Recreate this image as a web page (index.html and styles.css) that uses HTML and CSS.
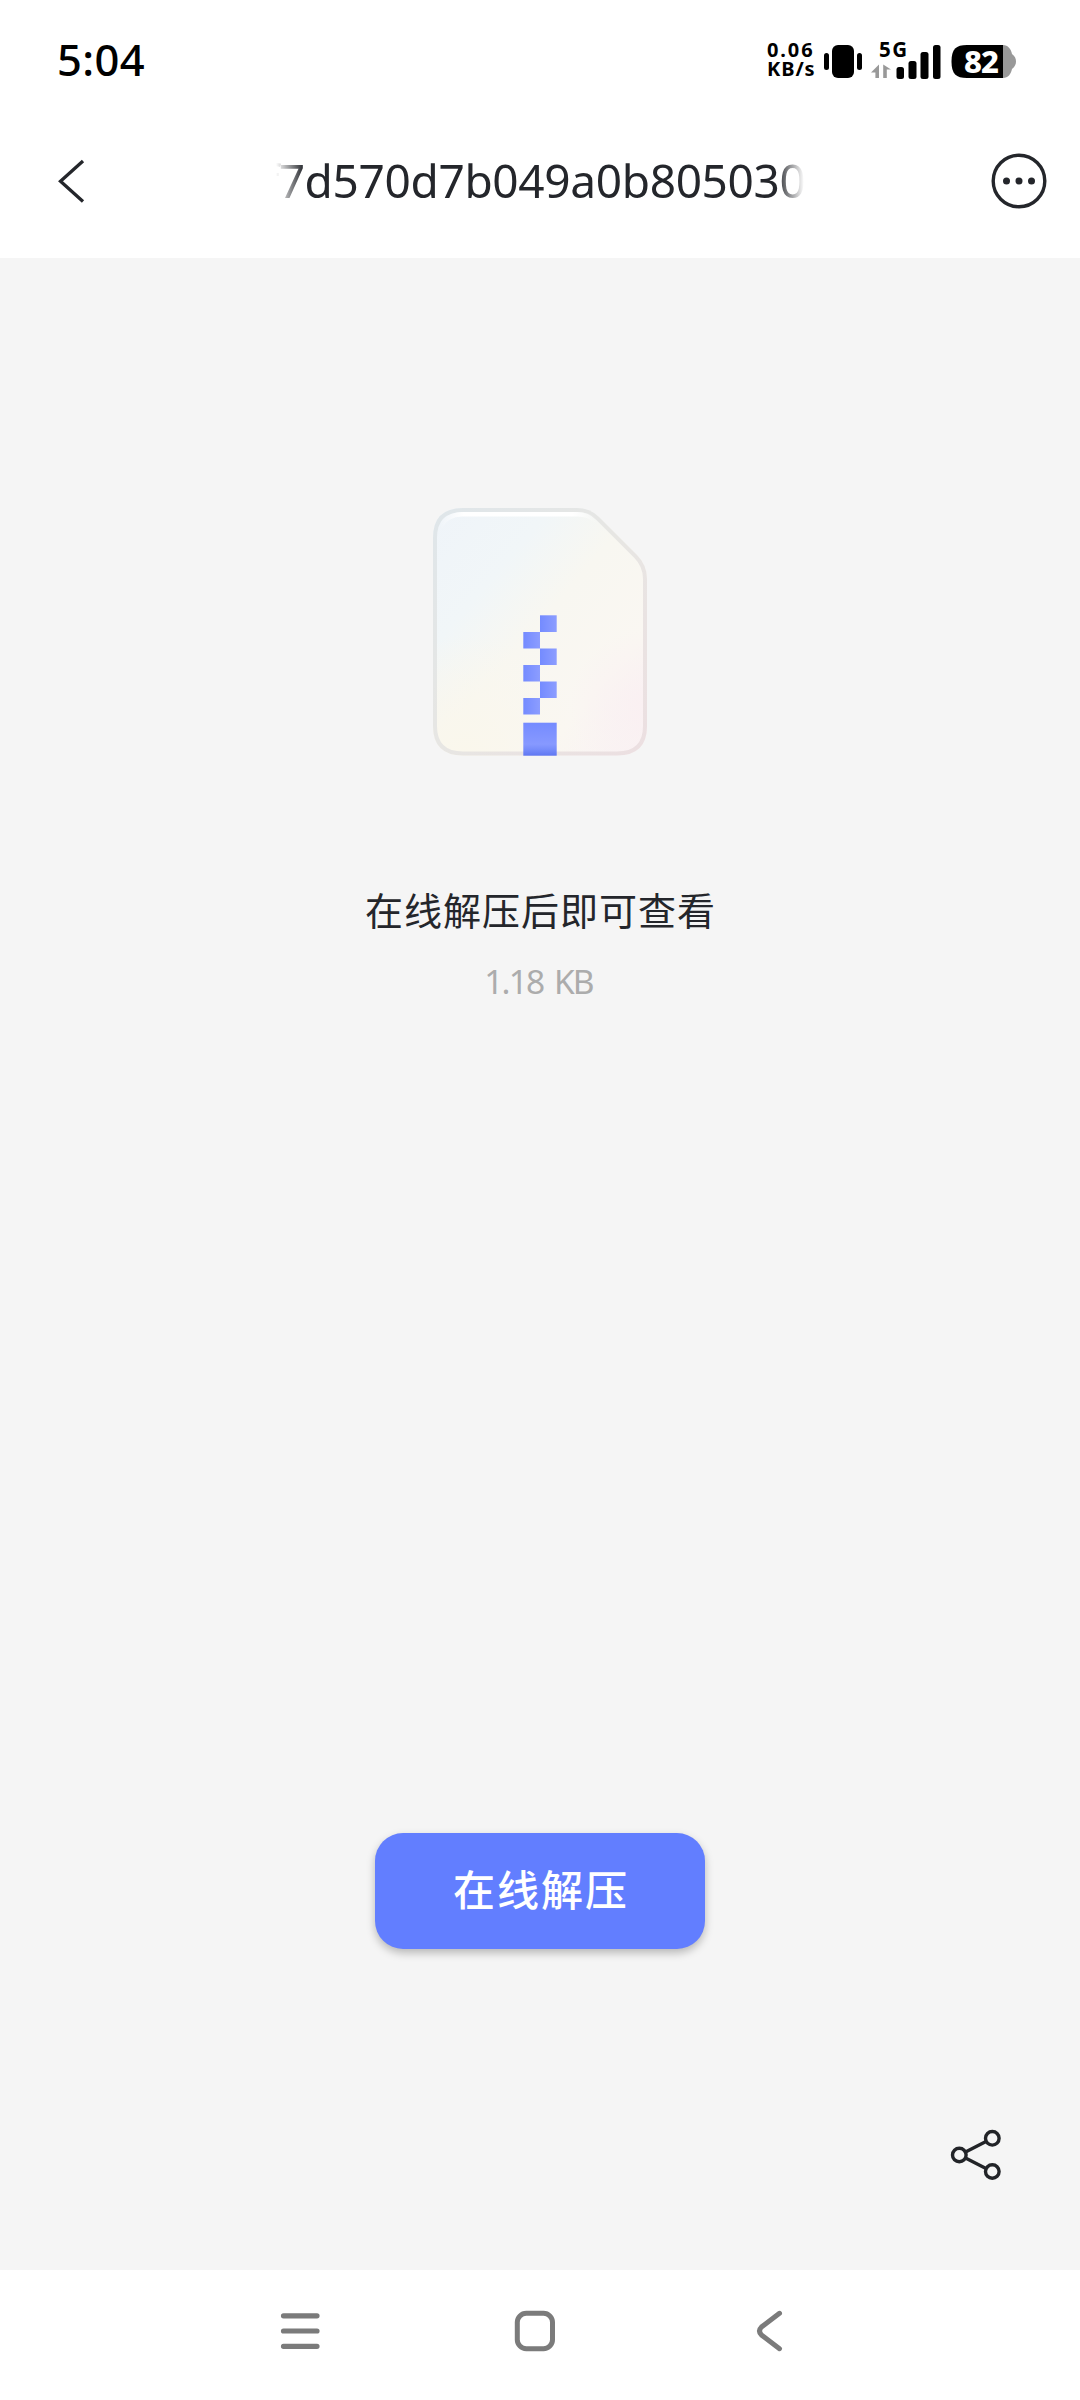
FILE: index.html
```
<!DOCTYPE html>
<html lang="zh-CN">
<head>
<meta charset="utf-8">
<title>在线解压</title>
<link rel="stylesheet" href="styles.css">
</head>
<body>
<div class="status">
  <span class="time">5:04</span>
  <div class="speed"><span class="rate">0.06</span><span>KB/s</span></div>
  <svg class="indicators" width="200" height="50" viewBox="820 35 200 50">
    <g fill="#000">
      <rect x="824" y="53" width="5" height="17" rx="2.5"/>
      <rect x="832" y="45" width="22" height="33" rx="6"/>
      <rect x="857" y="53" width="5" height="17" rx="2.5"/>
      <rect x="896.500" y="67" width="7.500" height="12" rx="2.500"/>
      <rect x="908.500" y="61" width="8" height="18" rx="2.500"/>
      <rect x="920.500" y="52" width="8" height="27" rx="2.500"/>
      <rect x="933" y="45" width="7.500" height="34" rx="2.500"/>
    </g>
    <path d="M879 64.500V78h-3.600v-5.500H871zM883.200 64.500V78h3.600v-8.500H891z" fill="#999"/>
    <text class="net" x="879" y="57" textLength="28">5G</text>
    <path d="M1002 45h1c5 0 8 4 9 9 3 2 4 5 4 7.500s-1 5-4 7.500c-1 5-4 9-9 9h-1z" fill="#999"/>
    <path d="M1003 45h-36c-11 0-15.500 4-15.500 16.500S956 78 967 78h36z" fill="#000"/>
    <text class="level" x="964" y="72.500" textLength="35">82</text>
  </svg>
</div>
<header class="header">
  <svg width="28" height="46" viewBox="57 158 28 46" fill="none" stroke="#24262b" stroke-width="3.300"><path d="M83 161L60.500 181.300 83 201.600"/></svg>
  <div class="title"><span>f7d570d7b049a0b805030</span></div>
  <svg width="56" height="56" viewBox="-28 -28 56 56"><circle r="25.800" fill="none" stroke="#24262b" stroke-width="3.400"/><g fill="#24262b"><circle cx="-12.500" r="3.500"/><circle r="3.500"/><circle cx="12.500" r="3.500"/></g></svg>
</header>
<main class="main">
  <svg class="file" width="216" height="250" viewBox="432 507 216 250">
    <defs>
      <linearGradient id="base" x1="0" y1="0" x2="1" y2="1">
        <stop offset="0" stop-color="#eff4f9"/><stop offset=".28" stop-color="#f1f6f8"/><stop offset=".48" stop-color="#f8f7f1"/><stop offset=".75" stop-color="#faf7f2"/><stop offset="1" stop-color="#f9f1f3"/>
      </linearGradient>
      <linearGradient id="edge" x1="0" y1="0" x2="1" y2="1">
        <stop offset="0" stop-color="#dfe6ea"/><stop offset=".5" stop-color="#e7e6e3"/><stop offset="1" stop-color="#ecdfe1"/>
      </linearGradient>
      <radialGradient id="warm"><stop offset="0" stop-color="#faf7ec"/><stop offset="1" stop-color="#faf7ec" stop-opacity="0"/></radialGradient>
      <radialGradient id="pink"><stop offset="0" stop-color="#faf0f2"/><stop offset="1" stop-color="#faf0f2" stop-opacity="0"/></radialGradient>
      <radialGradient id="sand"><stop offset="0" stop-color="#e9e4d6"/><stop offset="1" stop-color="#e9e4d6" stop-opacity="0"/></radialGradient>
      <linearGradient id="shine" x1="0" x2="1"><stop offset="0" stop-color="#fff" stop-opacity="0"/><stop offset=".15" stop-color="#fff"/><stop offset=".85" stop-color="#fff"/><stop offset="1" stop-color="#fff" stop-opacity="0"/></linearGradient>
      <linearGradient id="zip" x1="0" x2="1"><stop offset="0" stop-color="#748bff"/><stop offset="1" stop-color="#8c9dff"/></linearGradient>
      <linearGradient id="pull" x1="0" y1="0" x2="0" y2="1"><stop offset="0" stop-color="#758bff"/><stop offset=".65" stop-color="#8799ff"/><stop offset=".8" stop-color="#788dfb"/><stop offset="1" stop-color="#5f77f2"/></linearGradient>
      <clipPath id="sheet"><path d="M463 508H577Q590 508 599 517L637 555Q647 565 647 579V726Q647 755.500 617 755.500H463Q433 755.500 433 726V538Q433 508 463 508Z"/></clipPath>
    </defs>
    <g clip-path="url(#sheet)">
      <rect x="433" y="508" width="214" height="248" fill="url(#base)"/>
      <circle cx="465" cy="755" r="120" fill="url(#warm)"/>
      <circle cx="645" cy="705" r="75" fill="url(#pink)"/>
      <g fill="none" stroke-width="8">
        <path d="M463 508H577Q590 508 599 517L637 555Q647 565 647 579V726Q647 755.500 617 755.500H463Q433 755.500 433 726V538Q433 508 463 508Z" stroke="url(#edge)"/>
        <path d="M433 640V726Q433 755.500 463 755.500H545" stroke="url(#sand)"/>
      </g>
      <path d="M440 527Q447 514.500 462 514.200H577Q588 514 596 521" fill="none" stroke="url(#shine)" stroke-width="4.500"/>
    </g>
    <g fill="url(#zip)">
      <rect x="540" y="615.300" width="16.700" height="16.700"/><rect x="523.300" y="632" width="16.700" height="16.500"/>
      <rect x="540" y="648.500" width="16.700" height="16.500"/><rect x="523.300" y="665" width="16.700" height="16.500"/>
      <rect x="540" y="681.500" width="16.700" height="16.500"/><rect x="523.300" y="698" width="16.700" height="16.500"/>
    </g>
    <rect x="523.300" y="722.700" width="33.400" height="33" fill="url(#pull)"/>
  </svg>
  <p class="hint">在线解压后即可查看</p>
  <p class="size">1.18 KB</p>
  <button class="unzip">在线解压</button>
  <svg class="share" width="54" height="54" viewBox="949 2128 54 54" fill="none" stroke="#222428" stroke-width="3.400"><circle cx="959.300" cy="2155" r="6.800"/><circle cx="992.300" cy="2138.300" r="6.800"/><circle cx="992.300" cy="2171.500" r="6.800"/><path d="M965.500 2152L986 2141.500M965.500 2158L986 2168.500"/></svg>
</main>
<nav class="nav">
  <svg width="40" height="40" viewBox="0 0 40 40" stroke="#7b7b7b" stroke-width="5.200" stroke-linecap="round"><path d="M3.500 4.800H37M3.500 20H37M3.500 35.300H37"/></svg>
  <svg class="home" width="42" height="42" viewBox="0 0 42 42" fill="none" stroke="#7b7b7b" stroke-width="5"><rect x="3.300" y="3.300" width="35.200" height="35.400" rx="9"/></svg>
  <svg width="28" height="42" viewBox="0 0 28 42" fill="none" stroke="#7b7b7b" stroke-width="5" stroke-linecap="round"><path d="M23.500 3.300L5.500 17Q1.500 21 5.500 25L23.500 38.700"/></svg>
</nav>
</body>
</html>
```
FILE: styles.css
```
* { box-sizing: border-box; }
body {
  margin: 0;
  width: 1080px;
  height: 2400px;
  display: flex;
  flex-direction: column;
  background: #fff;
  color: #24262b;
  font-family: "Noto Sans", "Noto Sans CJK SC", sans-serif;
}
svg { display: block; flex: none; }
p { margin: 0; }
.status {
  height: 104px;
  display: flex;
  align-items: flex-start;
  padding: 34px 60px 0 57px;
  color: #000;
}
.time {
  flex: 1;
  font-size: 43.500px;
  font-weight: 500;
  line-height: 50px;
  letter-spacing: 0.4px;
}
.speed {
  display: flex;
  flex-direction: column;
  width: 53px;
  padding-top: 7px;
  font-size: 20px;
  font-weight: 700;
  line-height: 18.500px;
  letter-spacing: 0.9px;
}
.rate { letter-spacing: 1.900px; }
.indicators { margin-top: 1px; }
.net { font-size: 20.500px; font-weight: 700; }
.level { font-size: 31px; font-weight: 800; fill: #fff; }
.header {
  height: 154px;
  display: flex;
  align-items: center;
  justify-content: space-between;
  padding: 0 33px 0 57px;
}
.title {
  width: 528px;
  margin-left: 158px;
  margin-right: 155px;
  padding-bottom: 3px;
  overflow: hidden;
  display: flex;
  justify-content: flex-end;
  font-size: 46px;
  font-weight: 440;
  line-height: 60px;
  letter-spacing: -0.340px;
  white-space: nowrap;
  -webkit-mask-image: linear-gradient(90deg, transparent, #000 28px, #000 500px, transparent);
  mask-image: linear-gradient(90deg, transparent, #000 28px, #000 500px, transparent);
}
.title span { margin-right: -2px; }
.main {
  height: 2012px;
  display: flex;
  flex-direction: column;
  align-items: center;
  padding-top: 249px;
  background: #f5f5f5;
}
.hint {
  margin-top: 122px;
  padding-left: 1px;
  font-family: "Noto Sans CJK SC", sans-serif;
  font-size: 38px;
  line-height: 60px;
  letter-spacing: 1px;
}
.size {
  margin-top: 17px;
  margin-bottom: 1px;
  padding-right: 3px;
  font-size: 33.500px;
  font-weight: 400;
  line-height: 50px;
  letter-spacing: -1.900px;
  word-spacing: 4px;
  color: #acacac;
}
.unzip {
  margin-top: 826px;
  width: 330px;
  height: 116px;
  padding: 0 0 7px 2px;
  border: 0;
  border-radius: 28px;
  background: #627eff;
  box-shadow: 0 4px 8px rgba(0, 0, 0, 0.25);
  color: #fff;
  font-family: "Noto Sans CJK SC", sans-serif;
  font-size: 42px;
  font-weight: 500;
  letter-spacing: 2px;
}
.share { align-self: flex-end; margin: 179px 77px 0 0; }
.nav {
  height: 130px;
  display: flex;
  align-items: center;
  justify-content: space-between;
  padding: 0 296px 8px 280px;
}
.home { margin-right: 6px; }
```
